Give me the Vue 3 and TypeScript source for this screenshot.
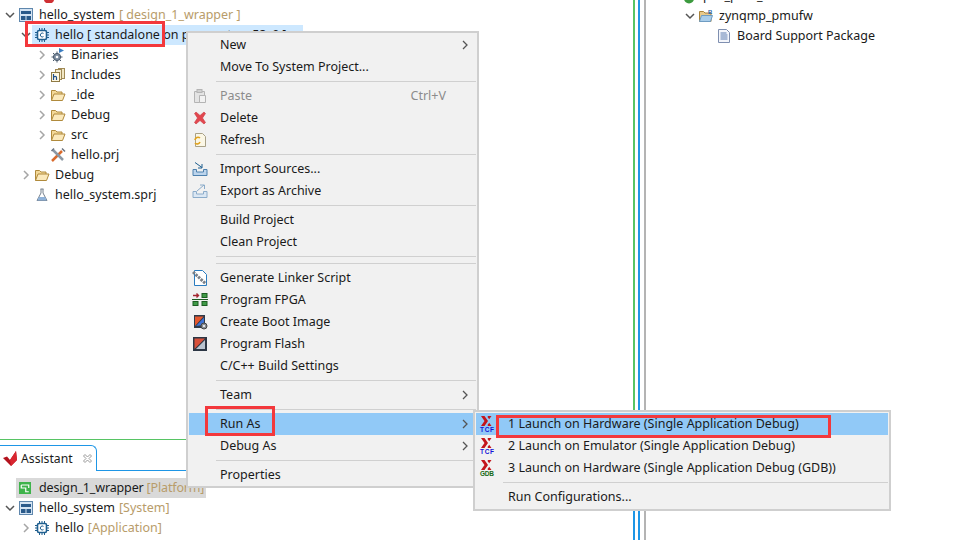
<script setup lang="ts">
interface Row { indent: number; arrow?: 'open' | 'closed'; icon: string; text: string; note?: string; cls?: string }
interface Item { label?: string; icon?: string; key?: string; sub?: boolean; sep?: boolean; off?: boolean; hot?: boolean }

const xilinx = '<path d="M2 0h3.500l3.500 5-3.500 5H2l3.500-5z" fill="#c4161c"/><path d="M9 0h3.500l-2.300 3.300-1.700-2.200zM9 10h3.500l-2.300-3.300-1.700 2.200z" fill="#c4161c"/>'

const icons: Record<string, string> = {
  sys: '<rect x="1.500" y="1.500" width="13" height="13" fill="#d5e4f3" stroke="#5f87ad"/><rect x="3" y="4" width="10" height="3" fill="#2a5a8a"/><rect x="3" y="9" width="4.500" height="4" fill="#2a5a8a"/><rect x="8.500" y="9" width="4.500" height="4" fill="#2a5a8a"/>',
  app: '<rect x="3.500" y="3.500" width="9" height="9" rx="1.500" fill="#fff" stroke="#1f5f8f" stroke-width="1.600"/><path d="M1 5.500h2M1 8h2M1 10.500h2M13 5.500h2M13 8h2M13 10.500h2M5.500 1v2M8 1v2M10.500 1v2M5.500 13v2M8 13v2M10.500 13v2" stroke="#1f5f8f" fill="none"/><path d="M9.500 6.400A2 2 0 1 0 9.500 9.600" stroke="#1f5f8f" fill="none"/>',
  bin: '<circle cx="7" cy="10" r="3.600" fill="#7d8da0" stroke="#4a5a6c"/><circle cx="7" cy="10" r="1.300" fill="#fff"/><path d="M7 4.500v2M7 13.500v2M1.500 10h2M10.500 10h2M3 6l1.500 1.500M11 14l-1.500-1.500M3 14l1.500-1.500" stroke="#4a5a6c" fill="none"/><path d="M9 1v5l5-2.500z" fill="#3b7ec2"/>',
  inc: '<rect x="8.500" y="1.500" width="6" height="10" fill="#f2e7c4" stroke="#a08a55"/><rect x="5.500" y="2.500" width="6" height="10" fill="#f5ecd0" stroke="#a08a55"/><rect x="1.500" y="5.500" width="8" height="9" fill="#fff8e2" stroke="#8f7a45"/><path d="M3.500 7v6M3.500 10.500c.5-1.500 3-1.500 3 0V13" stroke="#1f4f8a" stroke-width="1.200" fill="none"/>',
  folder: '<path d="M1.500 13.500v-10h4l1.500 1.500h5v2" fill="#f3d898" stroke="#b08a3c"/><path d="M1.500 13.500l2.500-6.500h11l-2.500 6.500z" fill="#fbe9bc" stroke="#b08a3c"/>',
  bsp: '<path d="M1.500 13.500v-10h4l1.500 1.500h6v8.500z" fill="#e8c98a" stroke="#a8823a"/><path d="M1.500 13.500l2-6h11l-2 6z" fill="#a9cdea" stroke="#6f9cc2"/><text x="10" y="6" font-size="6" font-weight="700" fill="#1f5f9f" font-family="Liberation Sans">B</text>',
  prj: '<path d="M2 14L12 4" stroke="#d96a2c" stroke-width="2.500"/><path d="M3 3l10 10" stroke="#8c98a4" stroke-width="2.500"/><path d="M1.500 4L4 1.500M12 1.500l3 3" stroke="#6a7480" stroke-width="1.500"/>',
  flask: '<path d="M6.500 2h3M7 2v4l-4 7.500h10L9 6V2" fill="#fff" stroke="#75808c"/><path d="M4.800 10h6.400l1.500 3.500H3.300z" fill="#8fb2d9"/>',
  doc: '<path d="M2.500 1.500h8l3 3v10h-11z" fill="#f4f6fb" stroke="#7f8fb0"/><path d="M4.500 5h6M4.500 7h7M4.500 9h7M4.500 11h7" stroke="#5c7cb0"/>',
  plat: '<rect x="0" y="0" width="16" height="16" fill="#3eb34b"/><path d="M3 4h10v4M3 4v4h6v5h4" stroke="#fff" stroke-width="1.600" fill="none"/>',
  gear: '<circle cx="7" cy="10.500" r="5" fill="#3c9a3e"/>',
  xmark: '<path d="M2.500 3.500L4 2l4 3.500L12 2l1.500 1.500L10.500 8l3 4.500L12 14 8 10.500 4 14l-1.500-1.500L5.500 8z" fill="#e2474f" stroke="#c93a42" stroke-width=".6"/>',
  top: '<ellipse cx="5" cy="13" rx="5" ry="3.500" fill="#cf2f33"/>',
  paste: '<path d="M2.500 3.500h10v11h-10z" fill="#e4e4e4" stroke="#b4b4b4"/><rect x="5" y="1.500" width="5" height="3" fill="#d0d0d0" stroke="#b4b4b4"/><path d="M7.500 7.500h6v7h-6z" fill="#f2f2f2" stroke="#b4b4b4"/>',
  refresh: '<path d="M3.500 1.500h7l3 3v10h-10z" fill="#fbf7e6" stroke="#a9a187"/><path d="M3 8a3 3 0 0 1 5-2M8 10a3 3 0 0 1-5 1" stroke="#e0a21e" stroke-width="1.600" fill="none"/>',
  imp: '<path d="M1 8.500v6h14v-6h-3.500v2.500h-7V8.500z" fill="#bcd4ec" stroke="#4d80ad"/><path d="M3 1.500l7 5M10 3v4H6" stroke="#1f5f8f" fill="none"/>',
  exp: '<path d="M1 8.500v6h14v-6h-3.500v2.500h-7V8.500z" fill="#dbe7f3" stroke="#8cacca"/><path d="M5 8l7-6M8 2h4.500v4" stroke="#8cacca" fill="none"/>',
  ld: '<path d="M2.500 .5h8l4 4v11h-12z" fill="#fff" stroke="#2a7cc0"/><path d="M1 2l13 12" stroke="#7a7f86" stroke-width="3" stroke-dasharray="2.500 1"/>',
  fpga: '<rect x="1" y="9.500" width="5" height="4" fill="#3f9a46" stroke="#1c5c22"/><rect x="10" y="9.500" width="5" height="4" fill="#3f9a46" stroke="#1c5c22"/><rect x="10" y="1.500" width="5" height="4" fill="#3f9a46" stroke="#1c5c22"/><path d="M0 7.500h16" stroke="#1c5c22"/><path d="M1 3.500h5M4.500 1.500l2 2-2 2" stroke="#a32630" stroke-width="1.400" fill="none"/>',
  boot: '<rect x="2" y="1" width="11" height="13" fill="#2f3a48"/><path d="M3 12V2.500h8.500z" fill="#e4572e"/><path d="M12 3.500V11l-8 1z" fill="#3f73d6"/><circle cx="12" cy="12" r="3" fill="#8a8f96" stroke="#444"/><circle cx="12" cy="12" r="1" fill="#fff"/>',
  flash: '<rect x="1" y="1" width="14" height="14" fill="#2c3644"/><path d="M2.500 13V2.500H13z" fill="#d8503a"/><path d="M13 4v9H4z" fill="#b9c3cf"/>',
  tcf: xilinx + '<text x="1" y="16" font-size="6.500" font-weight="700" fill="#1414d8" font-family="Liberation Sans" textLength="14">TCF</text>',
  gdb: xilinx + '<text x="1" y="16" font-size="6.500" font-weight="700" fill="#146a14" font-family="Liberation Sans" textLength="14">GDB</text>',
  vivado: '<path d="M0 7l4-1.500 3 3.500 6-9 1 9-6 6z" fill="#b3121d"/><path d="M7 9l6-9 1 9-6 6z" fill="#d92630"/>'
}

const leftTree: Row[] = [
  { indent: 26, icon: 'top', text: '' },
  { indent: 0, arrow: 'open', icon: 'sys', text: 'hello_system', note: '[ design_1_wrapper ]' },
  { indent: 16, arrow: 'open', icon: 'app', text: 'hello [ standalone on psu_cortexa53_0 ]', cls: 'selected' },
  { indent: 32, arrow: 'closed', icon: 'bin', text: 'Binaries' },
  { indent: 32, arrow: 'closed', icon: 'inc', text: 'Includes' },
  { indent: 32, arrow: 'closed', icon: 'folder', text: '_ide' },
  { indent: 32, arrow: 'closed', icon: 'folder', text: 'Debug' },
  { indent: 32, arrow: 'closed', icon: 'folder', text: 'src' },
  { indent: 32, icon: 'prj', text: 'hello.prj' },
  { indent: 16, arrow: 'closed', icon: 'folder', text: 'Debug' },
  { indent: 16, icon: 'flask', text: 'hello_system.sprj' }
]
const assistTree: Row[] = [
  { indent: 0, icon: 'plat', text: 'design_1_wrapper', note: '[Platform]', cls: 'grey' },
  { indent: 0, arrow: 'open', icon: 'sys', text: 'hello_system', note: '[System]' },
  { indent: 16, arrow: 'closed', icon: 'app', text: 'hello', note: '[Application]' }
]
const rightTree: Row[] = [
  { indent: 0, icon: 'gear', text: 'psu_pmu_0', cls: 'cut' },
  { indent: 16, arrow: 'open', icon: 'bsp', text: 'zynqmp_pmufw' },
  { indent: 34, icon: 'doc', text: 'Board Support Package' }
]
const menu: Item[] = [
  { label: 'New', sub: true }, { label: 'Move To System Project...' }, { sep: true },
  { label: 'Paste', icon: 'paste', key: 'Ctrl+V', off: true }, { label: 'Delete', icon: 'xmark' }, { label: 'Refresh', icon: 'refresh' }, { sep: true },
  { label: 'Import Sources...', icon: 'imp' }, { label: 'Export as Archive', icon: 'exp' }, { sep: true },
  { label: 'Build Project' }, { label: 'Clean Project' }, { sep: true }, { sep: true },
  { label: 'Generate Linker Script', icon: 'ld' }, { label: 'Program FPGA', icon: 'fpga' }, { label: 'Create Boot Image', icon: 'boot' }, { label: 'Program Flash', icon: 'flash' }, { label: 'C/C++ Build Settings' }, { sep: true },
  { label: 'Team', sub: true }, { sep: true },
  { label: 'Run As', sub: true, hot: true }, { label: 'Debug As', sub: true }, { sep: true },
  { label: 'Properties' }
]
const submenu: Item[] = [
  { label: '1 Launch on Hardware (Single Application Debug)', icon: 'tcf', hot: true },
  { label: '2 Launch on Emulator (Single Application Debug)', icon: 'tcf' },
  { label: '3 Launch on Hardware (Single Application Debug (GDB))', icon: 'gdb' },
  { sep: true },
  { label: 'Run Configurations...' }
]
</script>

<template>
  <div class="screen">
    <section class="left">
      <div class="tree top-tree">
        <div v-for="r in leftTree" :key="r.text + r.indent" class="row" :class="r.cls" :style="{ paddingLeft: r.indent + 'px' }">
          <span class="chev"><svg v-if="r.arrow" width="10" height="10" viewBox="0 0 10 10"><path :d="r.arrow === 'open' ? 'M1 3l4 4 4-4' : 'M3 1l4 4-4 4'" fill="none" :stroke="r.arrow === 'open' ? '#555' : '#a6a6a6'" stroke-width="1.500"/></svg></span>
          <svg class="ico" width="16" height="16" viewBox="0 0 16 16" v-html="icons[r.icon]"></svg>
          <span class="label">{{ r.text }}</span><span v-if="r.note" class="note">{{ r.note }}</span>
        </div>
      </div>
      <div class="assist">
        <div class="tabbar">
          <div class="tab">
            <svg width="18" height="16" viewBox="0 0 16 16" v-html="icons.vivado"></svg>
            <span>Assistant</span>
            <svg class="close" width="11" height="11" viewBox="0 0 11 11"><path d="M1.500 3L3 1.500 5.500 4 8 1.500 9.500 3 7 5.500 9.500 8 8 9.500 5.500 7 3 9.500 1.500 8 4 5.500z" fill="#fff" stroke="#9a9a9a"/></svg>
          </div>
        </div>
        <div class="tree assist-tree">
          <div v-for="r in assistTree" :key="r.text" class="row" :class="r.cls" :style="{ paddingLeft: r.indent + 'px' }">
            <span class="chev"><svg v-if="r.arrow" width="10" height="10" viewBox="0 0 10 10"><path :d="r.arrow === 'open' ? 'M1 3l4 4 4-4' : 'M3 1l4 4-4 4'" fill="none" :stroke="r.arrow === 'open' ? '#555' : '#a6a6a6'" stroke-width="1.500"/></svg></span>
            <svg class="ico" width="16" height="16" viewBox="0 0 16 16" v-html="icons[r.icon]"></svg>
            <span class="label">{{ r.text }}</span><span v-if="r.note" class="note">{{ r.note }}</span>
          </div>
        </div>
      </div>
    </section>
    <div class="sash"></div>
    <section class="right">
      <div class="tree right-tree">
        <div v-for="r in rightTree" :key="r.text" class="row" :class="r.cls" :style="{ paddingLeft: r.indent + 'px' }">
          <span class="chev"><svg v-if="r.arrow" width="10" height="10" viewBox="0 0 10 10"><path d="M1 3l4 4 4-4" fill="none" stroke="#555" stroke-width="1.500"/></svg></span>
          <svg class="ico" width="16" height="16" viewBox="0 0 16 16" v-html="icons[r.icon]"></svg>
          <span class="label">{{ r.text }}</span>
        </div>
      </div>
    </section>

    <div class="menu main-menu">
      <template v-for="(m, i) in menu" :key="i">
        <div v-if="m.sep" class="sep"></div>
        <div v-else class="item" :class="{ off: m.off, hot: m.hot }">
          <span class="mi"><svg v-if="m.icon" width="16" height="16" viewBox="0 0 16 16" v-html="icons[m.icon]"></svg></span>
          <span class="ml">{{ m.label }}</span>
          <span v-if="m.key" class="mk">{{ m.key }}</span>
          <svg v-if="m.sub" class="ms" width="8" height="10" viewBox="0 0 8 10"><path d="M2 1l4 4-4 4" fill="none" stroke="#555" stroke-width="1.300"/></svg>
        </div>
      </template>
    </div>
    <div class="menu sub-menu">
      <template v-for="(m, i) in submenu" :key="i">
        <div v-if="m.sep" class="sep"></div>
        <div v-else class="item" :class="{ hot: m.hot }">
          <span class="mi"><svg v-if="m.icon" width="16" height="17" viewBox="0 0 16 17" v-html="icons[m.icon]"></svg></span>
          <span class="ml">{{ m.label }}</span>
        </div>
      </template>
    </div>

    <div class="mark mark-a"></div>
    <div class="mark mark-b"></div>
    <div class="mark mark-c"></div>
  </div>
</template>

<style>
html, body { margin: 0; background: #fff; }
</style>

<style scoped>
.screen { width: 959px; height: 540px; position: relative; overflow: hidden; display: flex; background: #fff; font-family: "Noto Sans", sans-serif; font-size: 12.500px; color: #1a1a1a; }
.left { width: 635px; flex: none; display: flex; flex-direction: column; margin-top: -15px; height: 555px; }
.tree { display: flex; flex-direction: column; }
.top-tree { height: 454px; padding-left: 3px; border-bottom: 1px solid #57c464; border-right: 2px solid #57c464; flex: none; }
.row { height: 20px; display: flex; align-items: center; white-space: nowrap; flex: none; }
.row .label, .row .note { padding-bottom: 2px; }
.chev { width: 14px; margin-right: 1px; display: flex; justify-content: center; flex: none; }
.ico { margin-right: 5px; flex: none; }
.note { margin-left: 4px; color: #b89c6a; }
.selected { width: 284px; background: linear-gradient(to right, transparent 29px, #cde8ff 29px); }
.assist { flex: 1; margin-top: 5px; border-right: 2px solid #1e96e6; min-height: 0; }
.tabbar { height: 26px; border-bottom: 1px solid #1e96e6; box-sizing: border-box; }
.tab { width: 97px; height: 26px; box-sizing: border-box; border: 1px solid #1e96e6; border-left: 0; border-bottom: 0; border-top-right-radius: 6px; background: #fff; display: flex; align-items: center; gap: 1px; padding-left: 2px; font-size: 12.200px; }
.close { margin-left: 8px; }
.assist-tree { padding: 7px 0 0 3px; }
.grey { margin-left: 13px; width: 190px; background: #d9d9d9; padding-left: 0 !important; overflow: hidden; letter-spacing: -0.15px; }
.grey .chev { display: none; }
.grey .ico { width: 12px; height: 12px; margin: 0 8px 0 3px; }
.grey .note { margin-left: 3px; }
.sash { width: 11px; box-sizing: border-box; flex: none; border-right: 2px solid #b4b4b4; padding-left: 2px; background: linear-gradient(to right, #fff 3px, #1e96e6 3px, #1e96e6 5px, #fff 5px); }
.right { flex: 1; }
.right-tree { margin-top: -14px; padding-left: 21px; }
.cut .chev { visibility: hidden; }
.menu { position: absolute; box-sizing: border-box; background: #f1f1f1; border: 2px solid #cfcfcf; padding: 1px; display: flex; flex-direction: column; }
.main-menu { left: 186px; top: 31px; width: 293px; height: 457px; }
.sub-menu { left: 473px; top: 410px; width: 418px; height: 101px; }
.item { height: 22px; display: flex; align-items: center; position: relative; flex: none; }
.hot { background: #91c9f7; }
.off { color: #8c8c8c; }
.mi { width: 31px; padding-left: 3px; box-sizing: border-box; display: flex; align-items: center; flex: none; }
.sub-menu .mi { width: 32px; }
.ml { white-space: nowrap; padding-bottom: 1px; }
.mk { position: absolute; right: 30px; padding-bottom: 1px; }
.ms { position: absolute; right: 7px; top: 6px; }
.sep { height: 7px; flex: none; margin-left: 27px; position: relative; }
.sep::after { content: ""; position: absolute; left: 0; right: 0; top: 3px; height: 1px; background: #d0d0d0; }
.mark { position: absolute; border: 3px solid #f3383c; box-sizing: border-box; pointer-events: none; }
.mark-a { left: 25px; top: 21px; width: 140px; height: 26px; }
.mark-b { left: 205px; top: 406px; width: 70px; height: 30px; }
.mark-c { left: 496px; top: 415px; width: 335px; height: 23px; }
</style>
